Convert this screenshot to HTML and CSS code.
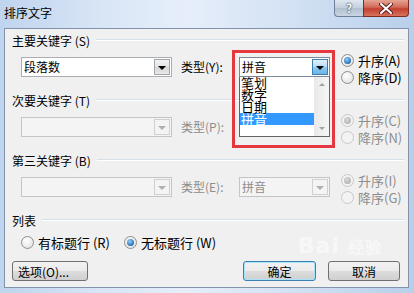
FILE: index.html
```html
<!DOCTYPE html>
<html lang="zh-CN">
<head>
    <meta charset="UTF-8">
    <meta name="viewport" content="width=device-width, initial-scale=1.0">
    <title>排序文字</title>
    <link rel="stylesheet" href="styles.css">
</head>
<body>
<div class="window">
    <div class="titlebar">
        <span class="caption">排序文字</span>
        <div class="caption-buttons">
            <span class="btn-help">?</span>
            <span class="btn-close">
                <svg width="14" height="11" viewBox="0 0 14 11">
                    <path d="M2 1 L12 10 M12 1 L2 10" stroke="#5a2320" stroke-width="4" stroke-linecap="round"/>
                    <path d="M2 1 L12 10 M12 1 L2 10" stroke="#ffffff" stroke-width="2" stroke-linecap="round"/>
                </svg>
            </span>
        </div>
    </div>

    <div class="client">
        <div class="group-head"><span>主要关键字 (S)</span><i class="rule"></i></div>
        <div class="row">
            <div class="combo key"><span class="value">段落数</span><span class="drop"><b class="arrow"></b></span></div>
            <span class="type-label">类型(Y):</span>
            <div class="type-cell">
                <div class="combo type open"><span class="value">拼音</span><span class="drop"><b class="arrow"></b></span></div>
                <div class="list">
                    <ul class="items">
                        <li>笔划</li>
                        <li>数字</li>
                        <li>日期</li>
                        <li class="selected">拼音</li>
                    </ul>
                    <div class="scrollbar">
                        <span class="sb-btn"><b class="sb-up"></b></span>
                        <span class="sb-track"></span>
                        <span class="sb-btn"><b class="sb-down"></b></span>
                    </div>
                </div>
                <div class="mark"></div>
            </div>
            <div class="order">
                <label class="radio"><i class="dot checked"></i>升序(A)</label>
                <label class="radio"><i class="dot"></i>降序(D)</label>
            </div>
        </div>

        <div class="group-head"><span>次要关键字 (T)</span><i class="rule"></i></div>
        <div class="row">
            <div class="combo key disabled"><span class="value"></span><span class="drop"><b class="arrow"></b></span></div>
            <span class="type-label disabled-text">类型(P):</span>
            <div class="type-cell"></div>
            <div class="order disabled-text">
                <label class="radio"><i class="dot checked off"></i>升序(C)</label>
                <label class="radio"><i class="dot off"></i>降序(N)</label>
            </div>
        </div>

        <div class="group-head"><span>第三关键字 (B)</span><i class="rule"></i></div>
        <div class="row">
            <div class="combo key disabled"><span class="value"></span><span class="drop"><b class="arrow"></b></span></div>
            <span class="type-label disabled-text">类型(E):</span>
            <div class="type-cell">
                <div class="combo type disabled"><span class="value">拼音</span><span class="drop"><b class="arrow"></b></span></div>
            </div>
            <div class="order disabled-text">
                <label class="radio"><i class="dot checked off"></i>升序(I)</label>
                <label class="radio"><i class="dot off"></i>降序(G)</label>
            </div>
        </div>

        <div class="group-head list-head"><span>列表</span><i class="rule"></i></div>
        <div class="header-row">
            <label class="radio"><i class="dot"></i>有标题行 (R)</label>
            <label class="radio"><i class="dot checked"></i>无标题行 (W)</label>
        </div>

        <div class="buttons">
            <span class="button options">选项(O)...</span>
            <span class="spacer"></span>
            <span class="watermark">Bai<em>经验</em></span>
            <span class="button default">确定</span>
            <span class="button">取消</span>
        </div>
    </div>
</div>
</body>
</html>
```

FILE: styles.css
```css
body {
    margin: 0;
    padding: 0;
    font-family: "Noto Sans CJK SC", "Microsoft YaHei", sans-serif;
    font-size: 12px;
    color: #000;
}

.window {
    width: 414px;
    height: 293px;
    display: flex;
    flex-direction: column;
    background: linear-gradient(to right, #bfd4ee 0%, #d9e6f6 25%, #e6eefa 45%, #d3e2f4 70%, #b8cfeb 100%);
    overflow: hidden;
}

.titlebar {
    height: 28px;
    display: flex;
    align-items: flex-start;
    flex-shrink: 0;
}

.caption {
    margin: 4px 0 0 4px;
    line-height: 18px;
}

.caption-buttons {
    margin-left: auto;
    margin-right: 5px;
    display: flex;
}

.btn-help, .btn-close {
    height: 17px;
    display: flex;
    align-items: center;
    justify-content: center;
    border: 1px solid #6d7f98;
    border-top: none;
    box-sizing: border-box;
}

.btn-help {
    width: 29px;
    border-radius: 0 0 0 4px;
    border-right: none;
    background: linear-gradient(#dfe7f1, #c3cfdd 50%, #b1bfd0 51%, #c9d5e2);
    color: #fff;
    font-size: 12px;
    font-weight: bold;
    text-shadow: 0 0 2px #304050, 0 0 1px #304050;
    line-height: 14px;
}

.btn-close {
    width: 46px;
    border-radius: 0 0 4px 0;
    border-color: #7a2c25;
    background: linear-gradient(#e5a594, #d2695a 45%, #c1402f 55%, #d8725c);
}

.client {
    flex: 1;
    margin: 0 5px 5px 4px;
    border: 1px solid #8394aa;
    background: #f0f0f0;
    display: flex;
    flex-direction: column;
}

.group-head {
    display: flex;
    align-items: center;
    height: 14px;
    margin: 4px 4px 0 7px;
}

.group-head .rule {
    flex: 1;
    margin-left: 6px;
    border-top: 1px solid #d5dfe5;
    border-bottom: 1px solid #ffffff;
}

.row {
    display: flex;
    align-items: flex-start;
    height: 20px;
    margin-top: 10px;
    margin-bottom: 16px;
}

.row + .group-head {
    margin-top: 0;
}

.combo {
    box-sizing: border-box;
    height: 20px;
    border: 1px solid #abadb3;
    background: #fff;
    display: flex;
    align-items: stretch;
}

.combo .value {
    flex: 1;
    padding-left: 2px;
    line-height: 18px;
}

.combo .drop {
    width: 16px;
    margin: 1px;
    border: 1px solid #a0a6ad;
    box-sizing: border-box;
    background: linear-gradient(#f2f2f2, #e4e4e4 50%, #d6d6d6 51%, #e8e8e8);
    display: flex;
    align-items: center;
    justify-content: center;
}

.arrow {
    width: 0;
    height: 0;
    border-left: 4px solid transparent;
    border-right: 4px solid transparent;
    border-top: 4px solid #000;
    margin-top: 1px;
}

.key {
    width: 151px;
    margin-left: 16px;
}

.combo.disabled {
    border-color: #c5c5c5;
    background: #f4f4f4;
    color: #8d8d8d;
}

.combo.disabled .drop {
    border-color: #d0d0d0;
    background: #f4f4f4;
}

.combo.disabled .arrow {
    border-top-color: #b0b0b0;
}

.type-label {
    width: 58px;
    margin-left: 9px;
    line-height: 20px;
}

.disabled-text {
    color: #8d8d8d;
}

.type-cell {
    width: 91px;
    height: 20px;
    position: relative;
}

.type {
    width: 91px;
}

.combo.open {
    border-color: #7a8a99;
}

.combo.open .drop {
    border-color: #3c7fb1;
    background: linear-gradient(#e0f1fc, #b6dcf6 50%, #8ecaf2 51%, #6bb4e4);
}

.list {
    position: absolute;
    left: 0;
    top: 20px;
    width: 91px;
    height: 60px;
    box-sizing: border-box;
    border: 1px solid #646464;
    border-top: none;
    background: #fff;
    display: flex;
    z-index: 2;
}

.items {
    list-style: none;
    margin: 0;
    padding: 0;
    flex: 1;
}

/* rows are 12px apart, the glyphs run into each other like the native list */
.items li {
    height: 12px;
    line-height: 12px;
    font-size: 13px;
    padding-left: 1px;
}

.items li.selected {
    background: #3399ff;
    color: #fff;
}

.scrollbar {
    width: 15px;
    display: flex;
    flex-direction: column;
    background: linear-gradient(to right, #e9e9e9, #f6f6f6);
}

.sb-btn {
    height: 15px;
    display: flex;
    align-items: center;
    justify-content: center;
}

.sb-track {
    flex: 1;
}

.sb-up, .sb-down {
    width: 0;
    height: 0;
    border-left: 3px solid transparent;
    border-right: 3px solid transparent;
}

.sb-up {
    border-bottom: 3px solid #a3a3a3;
}

.sb-down {
    border-top: 3px solid #a3a3a3;
}

.mark {
    position: absolute;
    left: -7px;
    top: -7px;
    width: 103px;
    height: 98px;
    box-sizing: border-box;
    border: 3px solid #e5383e;
    z-index: 3;
}

.order {
    margin-left: 11px;
    margin-top: -5px;
    display: flex;
    flex-direction: column;
}

.radio {
    display: flex;
    align-items: center;
    height: 17px;
    font-size: 13px;
}

.dot {
    width: 13px;
    height: 13px;
    box-sizing: border-box;
    border-radius: 50%;
    border: 1px solid #8f8f8f;
    background: radial-gradient(circle at 40% 35%, #ffffff, #dcdcdc);
    margin-right: 4px;
    position: relative;
}

.dot.checked::after {
    content: "";
    position: absolute;
    left: 2px;
    top: 2px;
    width: 7px;
    height: 7px;
    border-radius: 50%;
    background: radial-gradient(circle at 40% 35%, #8fd0f8, #2b6fb4 70%, #1e4f8c);
}

.dot.off {
    border-color: #c8c8c8;
    background: #f3f3f3;
}

.dot.checked.off::after {
    background: radial-gradient(circle at 40% 35%, #d8d8d8, #a8a8a8);
}

.list-head {
    margin-top: 0;
}

.header-row {
    display: flex;
    gap: 14px;
    margin: 7px 0 0 16px;
}

.buttons {
    display: flex;
    align-items: center;
    margin: 10px 8px 0 7px;
    position: relative;
}

.spacer {
    flex: 1;
}

.button {
    box-sizing: border-box;
    height: 20px;
    width: 72px;
    border: 1px solid #707070;
    border-radius: 3px;
    background: linear-gradient(#f2f2f2, #ebebeb 50%, #dddddd 51%, #cfcfcf);
    display: flex;
    align-items: center;
    justify-content: center;
    margin-left: 12px;
}

.button.options {
    width: 76px;
    margin-left: 0;
    justify-content: flex-start;
    padding-left: 5px;
}

.button.default {
    width: 73px;
    border-color: #3c7fb1;
    box-shadow: inset 0 0 0 1px #a9e3fa;
}

.watermark {
    position: absolute;
    right: 18px;
    top: -28px;
    font-family: "DejaVu Sans", sans-serif;
    font-size: 22px;
    font-weight: bold;
    color: rgba(255, 255, 255, 0.55);
    letter-spacing: 1px;
}

.watermark em {
    font-style: normal;
    font-size: 16px;
    margin-left: 8px;
}
```
